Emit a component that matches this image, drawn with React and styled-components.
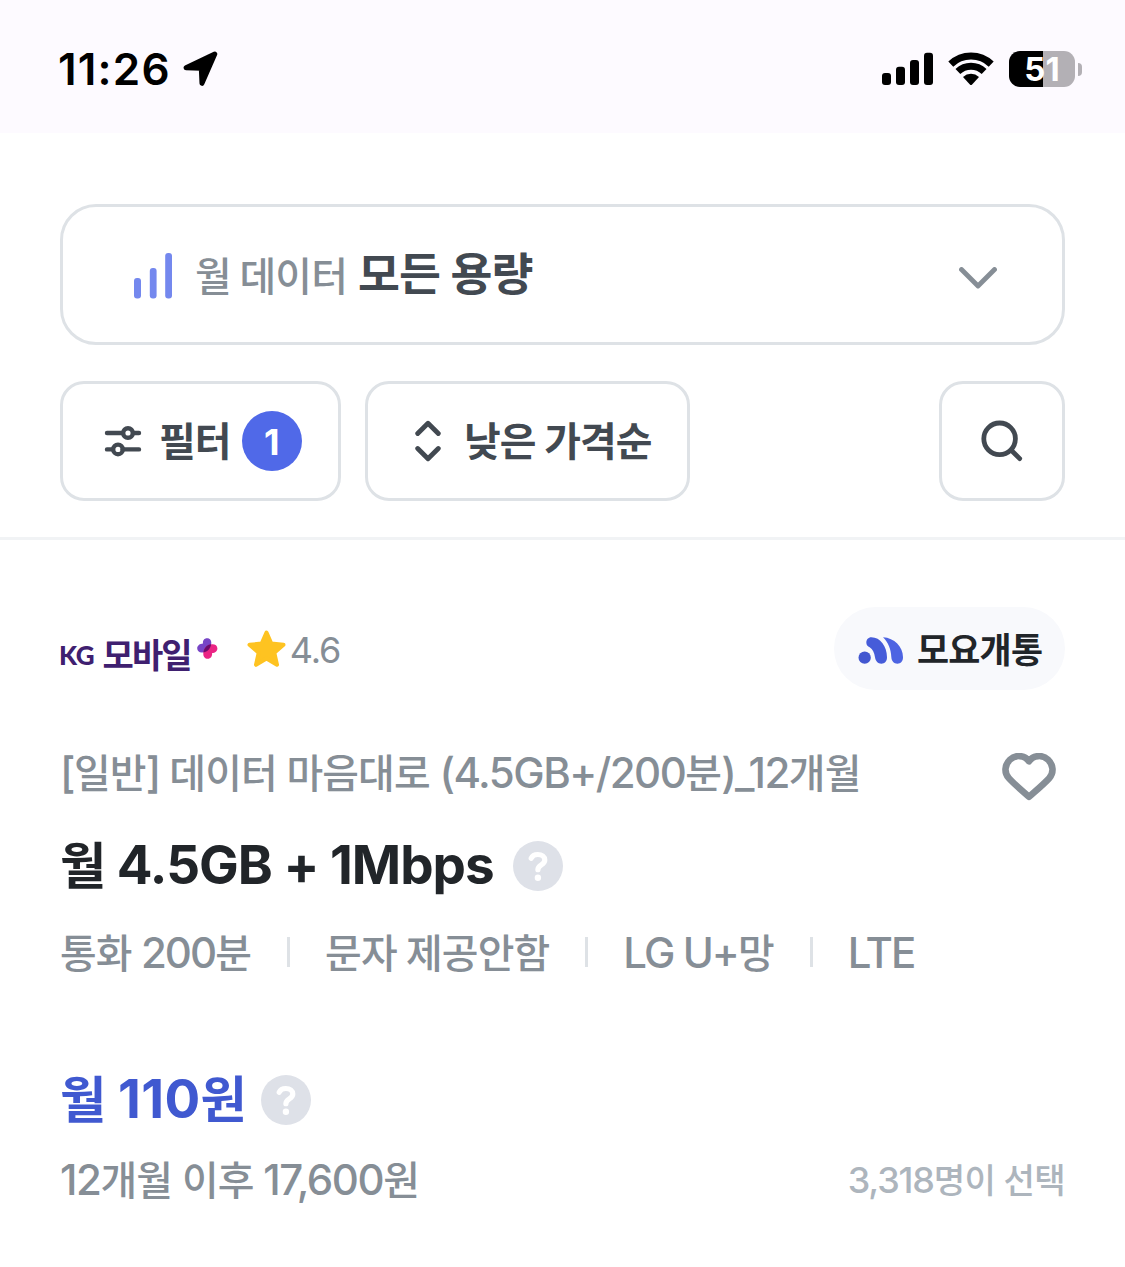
import styled, { createGlobalStyle } from "styled-components";

const GlobalStyle = createGlobalStyle`
  * {
    box-sizing: border-box;
    margin: 0;
    padding: 0;
  }
  body {
    background: #fff;
    font-family: Inter, "Noto Sans CJK KR", sans-serif;
    line-height: 1;
  }
  button {
    font: inherit;
    background: none;
    border: none;
  }
  svg {
    display: block;
    flex-shrink: 0;
  }
`;

const specs = ["통화 200분", "문자 제공안함", "LG U+망", "LTE"];

// hangul runs are a little smaller than latin and digits
function Text({ children, tracking }) {
  return (
    <Run $tracking={tracking}>
      {children
        .split(/([가-힣]+)/)
        .map((part, i) => (i % 2 ? <Hangul key={i}>{part}</Hangul> : part))}
    </Run>
  );
}

function LocationIcon() {
  return (
    <svg width="36" height="36" viewBox="0 0 36 36">
      <path
        d="M3 16.8 31.8 3 19 32.3 18.3 17.2Z"
        stroke="#000"
        strokeWidth="5"
        strokeLinejoin="round"
      />
    </svg>
  );
}

function SignalIcon() {
  return (
    <svg width="52" height="34" viewBox="0 0 52 34">
      <rect x="0" y="21" width="9" height="12" rx="3" />
      <rect x="14" y="14.7" width="9" height="18.3" rx="3" />
      <rect x="28" y="8" width="9" height="25" rx="3" />
      <rect x="42" y="0.7" width="9" height="32.3" rx="3" />
    </svg>
  );
}

function WifiIcon() {
  return (
    <svg width="46" height="34" viewBox="0 0 46 34" fill="none" stroke="#000">
      <path d="M2.8 12.1a29.3 29.3 0 0 1 40.4 0" strokeWidth="7.2" />
      <path d="M9.9 19.5a19 19 0 0 1 26.2 0" strokeWidth="7" />
      <path
        d="M15 24.9a12 12 0 0 1 16 0L23.9 32.7q-.9.8-1.8 0Z"
        fill="#000"
        stroke="none"
      />
    </svg>
  );
}

function BarsIcon() {
  return (
    <svg width="39" height="46" viewBox="0 0 39 46" fill="#7488ee">
      <rect x="0" y="25" width="7" height="20.5" rx="3" />
      <rect x="15.8" y="15" width="6.8" height="30.5" rx="3" />
      <rect x="31.2" y="0" width="6.8" height="45.5" rx="3" />
    </svg>
  );
}

function ChevronIcon() {
  return (
    <svg width="38" height="22" viewBox="0 0 38 22" fill="none">
      <path
        d="M2.5 2.5 19 19 35.5 2.5"
        stroke="#868e96"
        strokeWidth="4.8"
        strokeLinecap="round"
        strokeLinejoin="round"
      />
    </svg>
  );
}

function FilterIcon() {
  return (
    <svg
      width="38"
      height="32"
      viewBox="0 0 38 32"
      fill="none"
      stroke="#424951"
      strokeWidth="4.4"
      strokeLinecap="round"
    >
      <path d="M3 8h15.5M29 8h6M3 24.4h4.5M18.5 24.4H35" />
      <circle cx="24" cy="8" r="4.8" />
      <circle cx="14" cy="24.4" r="4.8" />
    </svg>
  );
}

function SortIcon() {
  return (
    <svg
      width="26"
      height="42"
      viewBox="0 0 26 42"
      fill="none"
      stroke="#424951"
      strokeWidth="4.8"
      strokeLinecap="round"
      strokeLinejoin="round"
    >
      <path d="M2.7 13.5 13 3.2l10.3 10.3M2.7 28.5 13 38.8l10.3-10.3" />
    </svg>
  );
}

function SearchIcon() {
  return (
    <svg
      width="42"
      height="42"
      viewBox="0 0 42 42"
      fill="none"
      stroke="#424951"
      strokeLinecap="round"
    >
      <circle cx="18.6" cy="18.8" r="15.8" strokeWidth="4.8" />
      <path d="M30.5 30.5 38.7 38.6" strokeWidth="4.8" />
    </svg>
  );
}

function PetalIcon() {
  return (
    <svg width="21" height="21" viewBox="0 0 21 21">
      <path
        d="M6 5.5C5.6 2.5 7.3.3 10 .3s4.5 2 4.3 4.9c-.2 5-4 9-9.2 9.3C2.2 14.7.2 12.7.2 10.2S2.8 5.6 6 5.5Z"
        fill="#7745c6"
      />
      <path
        d="M15.2 6.2c3-.1 5.2 1.5 5.2 4.2s-2.2 4.5-5.3 4.5c.3 3.3-1.5 5.8-4.3 5.8s-4.7-2.2-4.5-5.3c.3-5.2 3.8-8.9 8.9-9.2Z"
        fill="#ea2484"
      />
      <path
        d="M6.4 14.4c.6-4.4 3.5-7.6 7.8-8.1-.7 4.4-3.6 7.5-7.8 8.1Z"
        fill="#6b0c6b"
      />
    </svg>
  );
}

function StarIcon() {
  return (
    <svg width="39" height="38" viewBox="0 0 39 38">
      <path
        d="M19.5 2.5 24.3 13.6 36.5 14.8 27.3 22.8 30 34.8 19.5 28.5 9 34.8 11.7 22.8 2.5 14.8 14.7 13.6Z"
        fill="#fec321"
        stroke="#fec321"
        strokeWidth="4"
        strokeLinejoin="round"
      />
    </svg>
  );
}

function MoyoIcon() {
  return (
    <svg width="46" height="27" viewBox="18 19 136 81" fill="#4d64e2">
      <circle cx="37" cy="81" r="18.5" fill="#4257d0" />
      <path
        d="M42 36c0-9 6-16 15-16 27 0 47 28 47 60 0 12-7 19-17 19S70 92 68 80C66 66 61 56 52 50c-6-4-10-7-10-14Z"
        fill="#465cd9"
      />
      <path d="M92 20c34 2 60 28 60 60 0 12-7 19-17 19s-17-7-18-19C116 56 108 36 92 20Z" />
    </svg>
  );
}

function HeartIcon() {
  return (
    <svg width="54" height="48" viewBox="0 0 54 48" fill="none">
      <path
        d="M27 8.3C22.5 1.8 13.5 1.5 8 6.6c-5.7 5.4-5.9 13.2-1.2 18.6C11.5 30.5 21 38.5 27 43.8c6-5.3 15.5-13.3 20.2-18.6 4.7-5.4 4.5-13.2-1.2-18.6-5.5-5.1-14.5-4.8-19 1.7Z"
        stroke="#868e96"
        strokeWidth="6.6"
        strokeLinejoin="round"
      />
    </svg>
  );
}

function HelpIcon() {
  return (
    <svg width="50" height="50" viewBox="0 0 50 50" fill="none">
      <circle cx="25" cy="25" r="25" fill="#dee1e8" />
      <path
        d="M18.2 17.3c1-2.4 3.5-3.8 6.6-3.8 4.1 0 7 2.2 7 5.5 0 5-6.9 4.8-6.9 9.7"
        stroke="#fff"
        strokeWidth="5.2"
        strokeLinecap="round"
      />
      <circle cx="24.9" cy="36.8" r="3.2" fill="#fff" />
    </svg>
  );
}

function App() {
  return (
    <>
      <GlobalStyle />
      <StatusBar>
        <Clock>
          11:26
          <LocationIcon />
        </Clock>
        <StatusIcons>
          <SignalIcon />
          <WifiIcon />
          <Battery>
            <BatteryBody>51</BatteryBody>
            <BatteryTip />
          </Battery>
        </StatusIcons>
      </StatusBar>
      <Controls>
        <DataSelect>
          <BarsIcon />
          <SelectLabel>
            <Text tracking={-0.06}>월 데이터</Text>
          </SelectLabel>
          <SelectValue>
            <Text tracking={-0.015}>모든 용량</Text>
          </SelectValue>
          <ChevronIcon />
        </DataSelect>
        <ButtonRow>
          <FilterButton>
            <FilterIcon />
            <Text>필터</Text>
            <CountBadge>1</CountBadge>
          </FilterButton>
          <SortButton>
            <SortIcon />
            <Text>낮은 가격순</Text>
          </SortButton>
          <SearchButton>
            <SearchIcon />
          </SearchButton>
        </ButtonRow>
      </Controls>
      <PlanCard>
        <CardTop>
          <Carrier>
            <CarrierLatin>KG</CarrierLatin>
            <CarrierName>모바일</CarrierName>
            <PetalIcon />
          </Carrier>
          <Rating>
            <StarIcon />
            <Text>4.6</Text>
          </Rating>
          <MoyoBadge>
            <MoyoIcon />
            <Text>모요개통</Text>
          </MoyoBadge>
        </CardTop>
        <PlanName>
          <p>
            <Text tracking={-0.036}>
              [일반] 데이터 마음대로 (4.5GB+/200분)_12개월
            </Text>
          </p>
          <HeartIcon />
        </PlanName>
        <Headline>
          <h2>
            <Text tracking={-0.019}>월 4.5GB + 1Mbps</Text>
          </h2>
          <HelpIcon />
        </Headline>
        <Specs>
          {specs.map((spec) => (
            <li key={spec}>
              <Text tracking={-0.046}>{spec}</Text>
            </li>
          ))}
        </Specs>
        <Price>
          <h2>
            <Text tracking={0.006}>월 110원</Text>
          </h2>
          <HelpIcon />
        </Price>
        <CardBottom>
          <p>
            <Text>12개월 이후 17,600원</Text>
          </p>
          <Picked>
            <Text tracking={-0.033}>3,318명이 선택</Text>
          </Picked>
        </CardBottom>
      </PlanCard>
    </>
  );
}
export default App;

const Run = styled.span`
  letter-spacing: ${({ $tracking = -0.034 }) => $tracking}em;
  white-space: nowrap;
`;
const Hangul = styled.span`
  font-size: 0.95em;
  line-height: 0;
  letter-spacing: -0.022em;
`;

// status bar
const StatusBar = styled.div`
  display: flex;
  justify-content: space-between;
  align-items: center;
  height: 133px;
  padding: 5px 43px 0 58px;
  background: #fdfaff;
`;
const Clock = styled.div`
  display: flex;
  align-items: center;
  gap: 12px;
  font-size: 44px;
  font-weight: 600;
  letter-spacing: 1.2px;
`;
const StatusIcons = styled.div`
  display: flex;
  align-items: center;
  gap: 14px;
`;
const Battery = styled.div`
  display: flex;
  align-items: center;
  gap: 3px;
  margin-left: 1px;
`;
const BatteryBody = styled.div`
  width: 66px;
  height: 36px;
  border-radius: 11px;
  background: linear-gradient(90deg, #000 34px, #b3b0b5 34px);
  color: #fff;
  font-size: 33px;
  font-weight: 700;
  line-height: 37px;
  text-align: center;
`;
const BatteryTip = styled.div`
  width: 4px;
  height: 13px;
  border-radius: 0 6px 6px 0;
  background: #b3b0b5;
`;

// controls
const Controls = styled.div`
  height: 407px;
  padding: 71px 60px 0;
  border-bottom: 3px solid #f1f3f5;
`;
const DataSelect = styled.button`
  display: flex;
  align-items: center;
  width: 100%;
  height: 141px;
  padding: 2px 65px 0 71px;
  border: 3px solid #dee2e6;
  border-radius: 36px;
  & > svg:last-child {
    margin: 4px 0 0 auto;
  }
`;
const SelectLabel = styled.span`
  margin-left: 22px;
  color: #868e96;
  font-size: 42px;
  font-weight: 500;
`;
const SelectValue = styled.span`
  margin: -3px 0 0 11px;
  color: #424951;
  font-size: 48px;
  font-weight: 700;
`;
const ButtonRow = styled.div`
  display: flex;
  gap: 24px;
  margin-top: 36px;
`;
const OutlineButton = styled.button`
  display: flex;
  align-items: center;
  height: 120px;
  border: 3px solid #dee2e6;
  border-radius: 24px;
  color: #424951;
  font-size: 42px;
  font-weight: 700;
`;
const FilterButton = styled(OutlineButton)`
  gap: 17px;
  width: 281px;
  padding: 0 36px 0 41px;
`;
const SortButton = styled(OutlineButton)`
  gap: 23px;
  width: 325px;
  padding-left: 47px;
`;
const SearchButton = styled(OutlineButton)`
  justify-content: center;
  width: 126px;
  margin-left: auto;
`;
const CountBadge = styled.span`
  flex-shrink: 0;
  width: 60px;
  height: 60px;
  margin-left: -6px;
  border-radius: 50%;
  background: #5069e8;
  color: #fff;
  font-size: 36px;
  line-height: 62px;
  text-align: center;
`;

// plan card
const PlanCard = styled.div`
  padding: 67px 60px 0;
`;
const CardTop = styled.div`
  display: flex;
  align-items: center;
  height: 83px;
`;
const Carrier = styled.div`
  display: flex;
  align-items: center;
  color: #3f2070;
  font-weight: 700;
  svg {
    margin: 0 0 0 6px;
  }
`;
const CarrierLatin = styled.span`
  margin: 12px 0 0 -1px;
  font-family: Lato, sans-serif;
  font-size: 26px;
  font-weight: 900;
  letter-spacing: -0.3px;
`;
const CarrierName = styled.span`
  margin: 15px 0 0 8px;
  font-size: 34px;
  line-height: 40px;
  letter-spacing: -1.8px;
`;
const Rating = styled.div`
  display: flex;
  align-items: center;
  gap: 4px;
  margin-left: 29px;
  color: #868e96;
  font-size: 36px;
  span {
    padding-top: 2px;
  }
`;
const MoyoBadge = styled.div`
  display: flex;
  align-items: center;
  gap: 13px;
  width: 231px;
  height: 83px;
  margin-left: auto;
  padding: 3px 0 0 24px;
  border-radius: 42px;
  background: #f8f9fc;
  color: #212529;
  font-size: 36.7px;
  font-weight: 700;
`;
const PlanName = styled.div`
  display: flex;
  align-items: center;
  justify-content: space-between;
  height: 60px;
  margin-top: 53px;
  padding-right: 9px;
  color: #868e96;
  font-size: 42px;
  font-weight: 500;
  svg {
    margin-top: 7px;
  }
`;
const Headline = styled.div`
  display: flex;
  align-items: center;
  gap: 19px;
  height: 78px;
  margin-top: 24px;
  color: #212529;
  h2 {
    padding-bottom: 2px;
    font-size: 53px;
    font-weight: 700;
  }
`;
const Specs = styled.ul`
  display: flex;
  align-items: center;
  height: 60px;
  margin-top: 17px;
  color: #868e96;
  font-size: 42px;
  font-weight: 500;
  list-style: none;
  li {
    display: flex;
    align-items: center;
  }
  li + li::before {
    content: "";
    width: 3px;
    height: 30px;
    margin: 0 35px 0 36px;
    background: #dee2e6;
  }
  span {
    padding-top: 2px;
  }
  span span {
    padding: 0;
  }
`;
const Price = styled(Headline)`
  gap: 15px;
  margin-top: 79px;
  color: #4059d0;
`;
const CardBottom = styled.div`
  display: flex;
  align-items: center;
  justify-content: space-between;
  height: 60px;
  margin-top: 11px;
  color: #868e96;
  font-size: 42px;
  font-weight: 500;
`;
const Picked = styled.p`
  color: #adb5bd;
  font-size: 36px;
`;
